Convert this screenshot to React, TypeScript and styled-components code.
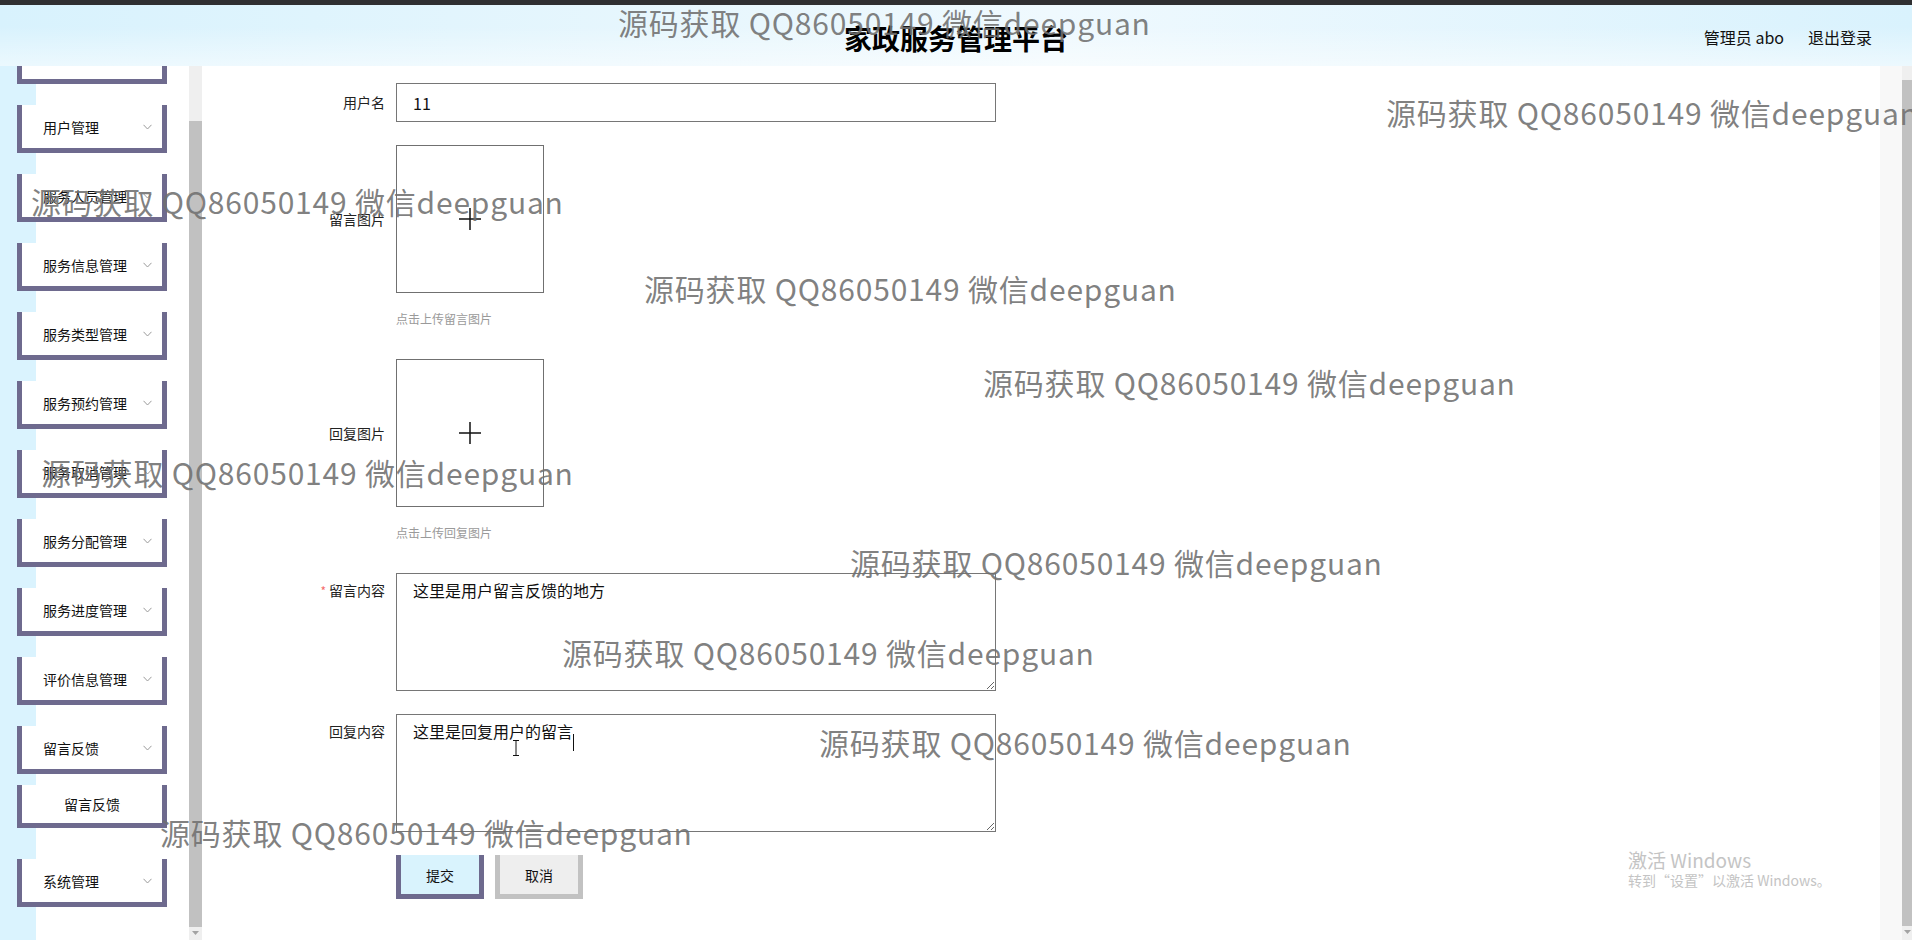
import React, { useLayoutEffect, useRef } from 'react';
import styled, { createGlobalStyle } from 'styled-components';

const GlobalStyle = createGlobalStyle`
  html, body {
    margin: 0;
    padding: 0;
    overflow: hidden;
  }

  body {
    font-family: "Noto Sans CJK SC", "Noto Sans", sans-serif;
    color: #222;
    background: #fff;
  }

  * {
    box-sizing: border-box;
  }
`;

const FRAME = '#6e6a8e';

const Page = styled.div`
  position: relative;
  width: 1912px;
  height: 940px;
  display: flex;
  flex-direction: column;
  overflow: hidden;
`;

const TopStrip = styled.div`
  flex: none;
  height: 5px;
  background: #2f2f31;
`;

const Header = styled.header`
  flex: none;
  height: 61px;
  display: grid;
  grid-template-columns: 1fr auto 1fr;
  align-items: center;
  background:
    linear-gradient(to bottom, rgba(255, 255, 255, 0) 35%, rgba(255, 255, 255, 0.5) 100%),
    linear-gradient(to right, #d8f2fd 0%, #e9f7fd 40%, #eff9fe 55%, #d9f2fd 100%);
`;

const Title = styled.h1`
  grid-column: 2;
  margin: 0;
  padding-top: 5px;
  font-size: 28px;
  font-weight: 700;
  color: #000;
`;

const UserBar = styled.div`
  grid-column: 3;
  justify-self: end;
  display: flex;
  gap: 24px;
  padding: 2px 40px 0 0;
  font-size: 16px;
  color: #111;
`;

const Body = styled.div`
  flex: 1;
  display: flex;
  min-height: 0;
`;

const Sidebar = styled.aside`
  flex: none;
  width: 202px;
  display: flex;
`;

const MenuPane = styled.div`
  width: 189px;
  height: 100%;
  overflow: hidden;
  background: linear-gradient(to right, #daf3fe 0, #daf3fe 36px, #fff 36px);
`;

const MenuList = styled.ul`
  list-style: none;
  margin: 0;
  padding: 20px 0 40px 17px;
`;

const MenuGroup = styled.li`
  display: flex;
  flex-direction: column;
  margin-bottom: 21px;
`;

const MenuCard = styled.div<{ $sub?: boolean }>`
  width: 150px;
  height: ${(p) => (p.$sub ? 43 : 48)}px;
  margin: ${(p) => (p.$sub ? '11px 0 10px' : '0')};
  display: flex;
  align-items: center;
  justify-content: ${(p) => (p.$sub ? 'center' : 'space-between')};
  padding: ${(p) => (p.$sub ? '0' : '0 10px 0 21px')};
  background: #fff;
  border: 5px solid ${FRAME};
  border-top: none;
  font-size: 14px;
  color: #111;
`;

const Chevron = styled.svg`
  flex: none;
  width: 9px;
  height: 6px;
`;

const ScrollTrack = styled.div<{ $w: number; $top: number; $len: number }>`
  flex: none;
  width: ${(p) => p.$w}px;
  height: 100%;
  display: flex;
  flex-direction: column;
  align-items: center;
  background: #efefef;

  &::before {
    content: '';
    display: block;
    width: 100%;
    margin-top: ${(p) => p.$top}px;
    height: ${(p) => p.$len}px;
    background: #c1c1c1;
  }
`;

const ScrollArrow = styled.svg`
  margin-top: 4px;
  width: 7px;
  height: 4px;
`;

const Main = styled.main`
  flex: 1;
  display: flex;
  min-width: 0;
`;

const FormPane = styled.section`
  flex: 1;
  padding: 17px 0 0 94px;
  background: #fff;
`;

const Gutter = styled.div`
  flex: none;
  width: 22px;
  background: #f8f8f8;
`;

const FormItem = styled.div`
  display: flex;
  align-items: flex-start;
  margin-bottom: 23px;
`;

const Label = styled.label<{ $lh: number }>`
  flex: none;
  width: 100px;
  padding-right: 11px;
  text-align: right;
  font-size: 14px;
  line-height: ${(p) => p.$lh}px;
  color: #222;
`;

const Star = styled.span`
  margin-right: 3px;
  color: #f56c6c;
  font-size: 12px;
`;

const Control = styled.div`
  display: flex;
  flex-direction: column;
  position: relative;
`;

const TextInput = styled.input`
  width: 600px;
  height: 39px;
  padding: 0 16px;
  border: 1px solid #767676;
  outline: none;
  font-family: inherit;
  font-size: 16px;
  color: #111;
`;

const UploadBox = styled.div`
  width: 148px;
  height: 148px;
  display: flex;
  align-items: center;
  justify-content: center;
  border: 1px solid #707070;
  background: #fff;
`;

const Hint = styled.div`
  margin: 16px 0 7px;
  font-size: 12px;
  line-height: 20px;
  color: #9a9a9a;
`;

const TextArea = styled.textarea`
  width: 600px;
  height: 118px;
  padding: 5px 16px;
  border: 1px solid #767676;
  outline: none;
  font-family: inherit;
  font-size: 16px;
  line-height: 22px;
  color: #111;
`;

const Caret = styled.span`
  position: absolute;
  left: 177px;
  top: 20px;
  width: 1px;
  height: 17px;
  background: #111;
`;

const IBeam = styled.svg`
  position: absolute;
  left: 116px;
  top: 26px;
  width: 8px;
  height: 16px;
`;

const Actions = styled.div`
  display: flex;
  gap: 11px;
  margin-left: 100px;
`;

const ActionButton = styled.button<{ $primary?: boolean }>`
  width: 88px;
  height: 44px;
  padding: 0;
  border: 5px solid ${(p) => (p.$primary ? FRAME : '#c2c2c2')};
  border-top: none;
  background: ${(p) => (p.$primary ? '#d9f3fd' : '#eeeeee')};
  font-family: inherit;
  font-size: 14px;
  color: #111;
`;

const Watermark = styled.span<{ $x: number; $y: number }>`
  position: absolute;
  left: ${(p) => p.$x}px;
  top: ${(p) => p.$y - 15}px;
  font-size: 30px;
  line-height: 30px;
  letter-spacing: 0.8px;
  white-space: nowrap;
  color: rgba(112, 112, 112, 0.88);
  pointer-events: none;
`;

const Activation = styled.div`
  position: absolute;
  left: 1628px;
  top: 848px;
  color: #c4c4c4;
  pointer-events: none;
  line-height: 1.25;
`;

const ActivationTitle = styled.div`
  font-size: 19px;
`;

const ActivationNote = styled.div`
  font-size: 14px;
`;

const menus = [
  '首页',
  '用户管理',
  '服务人员管理',
  '服务信息管理',
  '服务类型管理',
  '服务预约管理',
  '服务取消管理',
  '服务分配管理',
  '服务进度管理',
  '评价信息管理',
  '留言反馈',
  '系统管理',
];

const marks: Array<[number, number]> = [
  [618, 22],
  [1386, 112],
  [31, 201],
  [644, 288],
  [983, 382],
  [41, 472],
  [850, 562],
  [562, 652],
  [819, 742],
  [160, 832],
];

const Plus = () => (
  <svg width="22" height="22" viewBox="0 0 22 22">
    <path d="M11 0v22M0 11h22" stroke="#111" strokeWidth="1.5" fill="none" />
  </svg>
);

const App = () => {
  const paneRef = useRef<HTMLDivElement>(null);

  useLayoutEffect(() => {
    if (paneRef.current) paneRef.current.scrollTop = 50;
  }, []);

  return (
    <Page>
      <GlobalStyle />
      <TopStrip />
      <Header>
        <Title>家政服务管理平台</Title>
        <UserBar>
          <span>管理员 abo</span>
          <span>退出登录</span>
        </UserBar>
      </Header>
      <Body>
        <Sidebar>
          <MenuPane ref={paneRef}>
            <MenuList>
              {menus.map((name) => (
                <MenuGroup key={name}>
                  <MenuCard>
                    {name}
                    <Chevron viewBox="0 0 9 6">
                      <polyline points="0.5,0.8 4.5,5 8.5,0.8" fill="none" stroke="#9a9a9a" strokeWidth="1" />
                    </Chevron>
                  </MenuCard>
                  {name === '留言反馈' && <MenuCard $sub>留言反馈</MenuCard>}
                </MenuGroup>
              ))}
            </MenuList>
          </MenuPane>
          <ScrollTrack $w={13} $top={55} $len={806}>
            <ScrollArrow viewBox="0 0 7 4">
              <polygon points="0,0 7,0 3.5,4" fill="#a3a3a3" />
            </ScrollArrow>
          </ScrollTrack>
        </Sidebar>
        <Main>
          <FormPane>
            <FormItem>
              <Label $lh={39}>用户名</Label>
              <TextInput defaultValue="11" readOnly />
            </FormItem>
            <FormItem>
              <Label $lh={148}>留言图片</Label>
              <Control>
                <UploadBox>
                  <Plus />
                </UploadBox>
                <Hint>点击上传留言图片</Hint>
              </Control>
            </FormItem>
            <FormItem>
              <Label $lh={148}>回复图片</Label>
              <Control>
                <UploadBox>
                  <Plus />
                </UploadBox>
                <Hint>点击上传回复图片</Hint>
              </Control>
            </FormItem>
            <FormItem>
              <Label $lh={34}>
                <Star>*</Star>留言内容
              </Label>
              <Control>
                <TextArea defaultValue="这里是用户留言反馈的地方" />
              </Control>
            </FormItem>
            <FormItem>
              <Label $lh={34}>回复内容</Label>
              <Control>
                <TextArea defaultValue="这里是回复用户的留言" />
                <Caret />
                <IBeam viewBox="0 0 8 16">
                  <path d="M1 0.5h6M1 15.5h6M4 0.5v15" stroke="#111" strokeWidth="1" fill="none" />
                </IBeam>
              </Control>
            </FormItem>
            <Actions>
              <ActionButton $primary>提交</ActionButton>
              <ActionButton>取消</ActionButton>
            </Actions>
          </FormPane>
          <Gutter />
          <ScrollTrack $w={10} $top={14} $len={846}>
            <ScrollArrow viewBox="0 0 7 4">
              <polygon points="0,0 7,0 3.5,4" fill="#a3a3a3" />
            </ScrollArrow>
          </ScrollTrack>
        </Main>
      </Body>
      {marks.map(([x, y]) => (
        <Watermark key={`${x}-${y}`} $x={x} $y={y}>
          源码获取 QQ86050149 微信deepguan
        </Watermark>
      ))}
      <Activation>
        <ActivationTitle>激活 Windows</ActivationTitle>
        <ActivationNote>转到“设置”以激活 Windows。</ActivationNote>
      </Activation>
    </Page>
  );
};

export default App;
